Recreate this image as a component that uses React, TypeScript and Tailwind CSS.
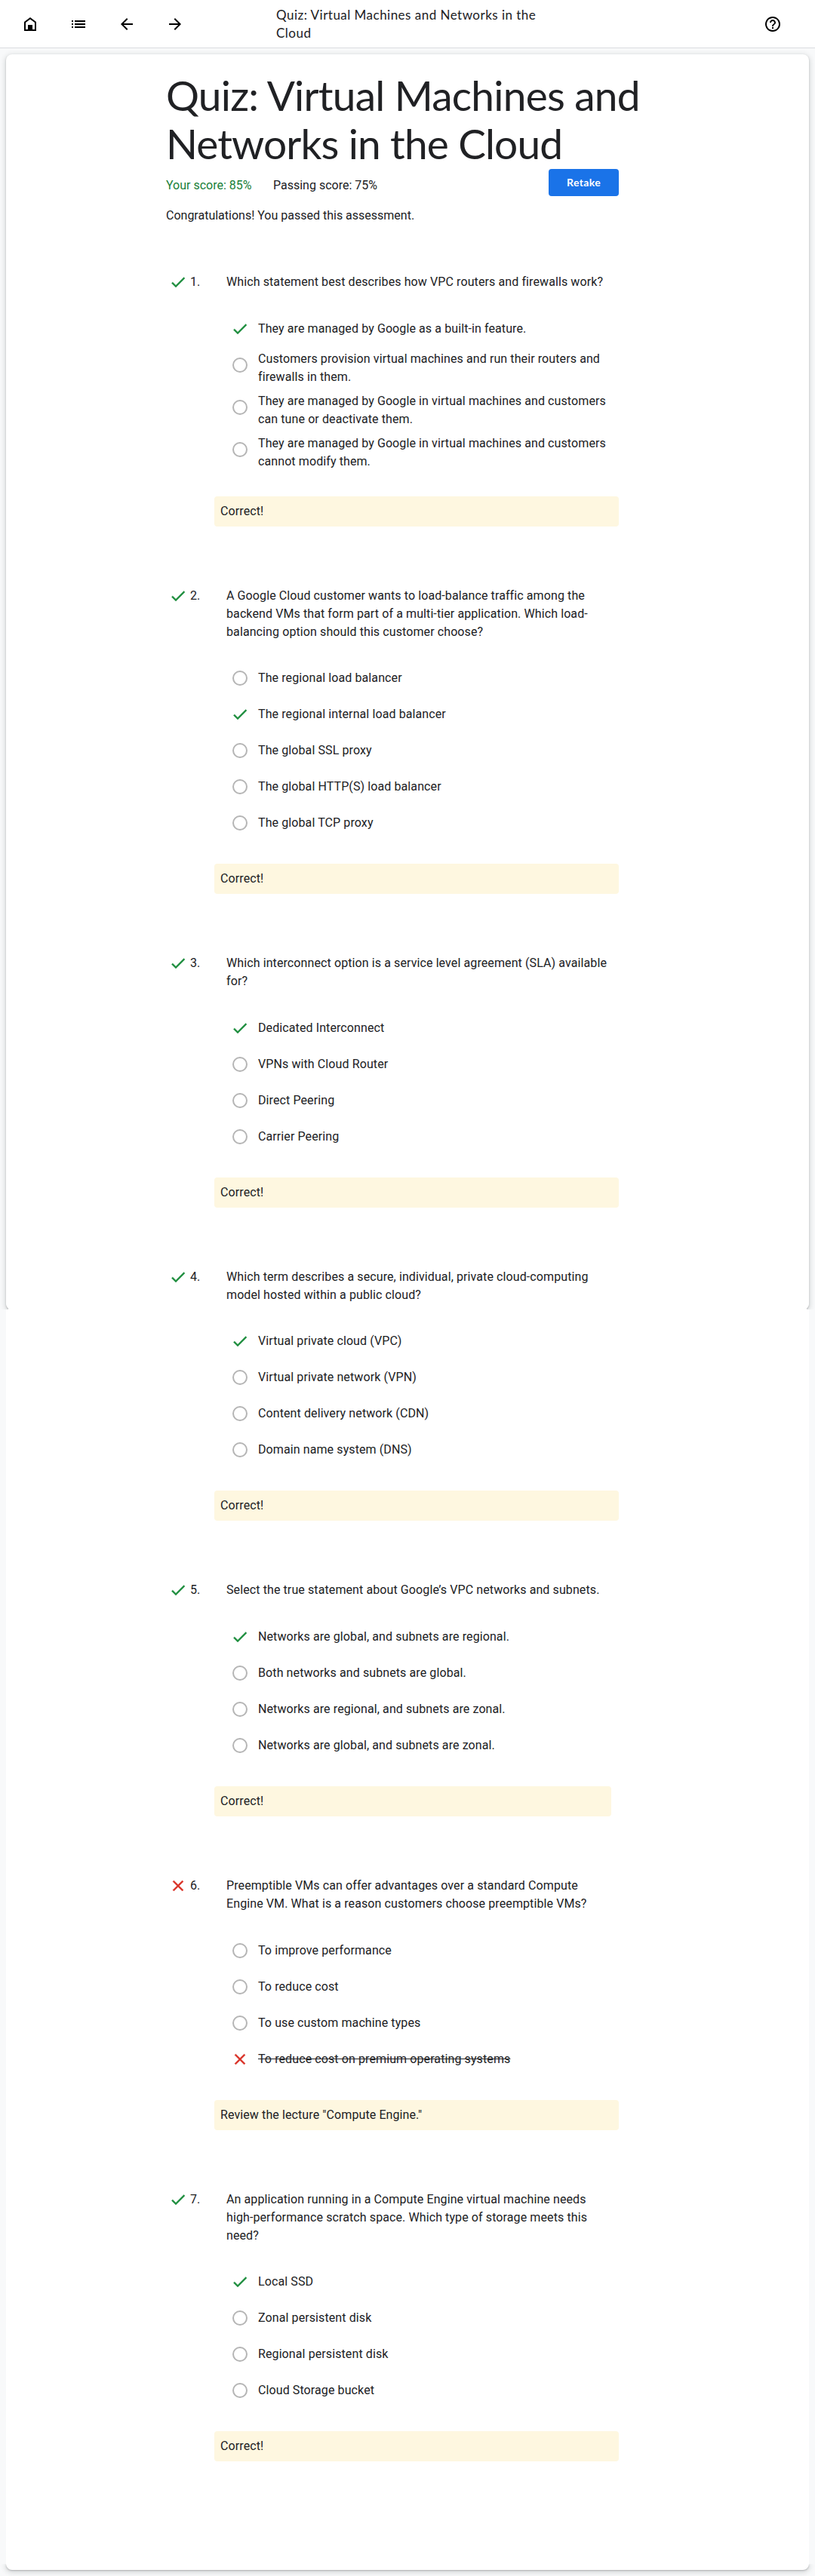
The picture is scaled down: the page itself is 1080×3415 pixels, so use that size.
type Mark = "right" | "wrong" | "none";

type Question = {
  prompt: string[];
  result: Mark;
  options: { lines: string[]; mark?: Mark }[];
  feedback: string;
  narrow?: boolean;
};

const questions: Question[] = [
  {
    prompt: ["Which statement best describes how VPC routers and firewalls work?"],
    result: "right",
    options: [
      { lines: ["They are managed by Google as a built-in feature."], mark: "right" },
      { lines: ["Customers provision virtual machines and run their routers and", "firewalls in them."] },
      { lines: ["They are managed by Google in virtual machines and customers", "can tune or deactivate them."] },
      { lines: ["They are managed by Google in virtual machines and customers", "cannot modify them."] },
    ],
    feedback: "Correct!",
  },
  {
    prompt: [
      "A Google Cloud customer wants to load-balance traffic among the",
      "backend VMs that form part of a multi-tier application. Which load-",
      "balancing option should this customer choose?",
    ],
    result: "right",
    options: [
      { lines: ["The regional load balancer"] },
      { lines: ["The regional internal load balancer"], mark: "right" },
      { lines: ["The global SSL proxy"] },
      { lines: ["The global HTTP(S) load balancer"] },
      { lines: ["The global TCP proxy"] },
    ],
    feedback: "Correct!",
  },
  {
    prompt: ["Which interconnect option is a service level agreement (SLA) available", "for?"],
    result: "right",
    options: [
      { lines: ["Dedicated Interconnect"], mark: "right" },
      { lines: ["VPNs with Cloud Router"] },
      { lines: ["Direct Peering"] },
      { lines: ["Carrier Peering"] },
    ],
    feedback: "Correct!",
  },
  {
    prompt: ["Which term describes a secure, individual, private cloud-computing", "model hosted within a public cloud?"],
    result: "right",
    options: [
      { lines: ["Virtual private cloud (VPC)"], mark: "right" },
      { lines: ["Virtual private network (VPN)"] },
      { lines: ["Content delivery network (CDN)"] },
      { lines: ["Domain name system (DNS)"] },
    ],
    feedback: "Correct!",
  },
  {
    prompt: ["Select the true statement about Google’s VPC networks and subnets."],
    result: "right",
    options: [
      { lines: ["Networks are global, and subnets are regional."], mark: "right" },
      { lines: ["Both networks and subnets are global."] },
      { lines: ["Networks are regional, and subnets are zonal."] },
      { lines: ["Networks are global, and subnets are zonal."] },
    ],
    feedback: "Correct!",
    narrow: true,
  },
  {
    prompt: ["Preemptible VMs can offer advantages over a standard Compute", "Engine VM. What is a reason customers choose preemptible VMs?"],
    result: "wrong",
    options: [
      { lines: ["To improve performance"] },
      { lines: ["To reduce cost"] },
      { lines: ["To use custom machine types"] },
      { lines: ["To reduce cost on premium operating systems"], mark: "wrong" },
    ],
    feedback: 'Review the lecture "Compute Engine."',
  },
  {
    prompt: [
      "An application running in a Compute Engine virtual machine needs",
      "high-performance scratch space. Which type of storage meets this",
      "need?",
    ],
    result: "right",
    options: [
      { lines: ["Local SSD"], mark: "right" },
      { lines: ["Zonal persistent disk"] },
      { lines: ["Regional persistent disk"] },
      { lines: ["Cloud Storage bucket"] },
    ],
    feedback: "Correct!",
  },
];

function Icon({ d, className = "" }: { d: string; className?: string }) {
  return (
    <svg viewBox="0 0 24 24" className={"size-6 shrink-0 " + className} fill="currentColor" fillRule="evenodd">
      <path d={d} />
    </svg>
  );
}

const HOME = "M4 21V9l8-6 8 6v12H4zM6 19V10l6-4.5 6 4.500v9h-3v-6H9v6H6z";
const LIST =
  "M3 13h2v-2H3v2zm0 4h2v-2H3v2zm0-8h2V7H3v2zm4 4h14v-2H7v2zm0 4h14v-2H7v2zM7 7v2h14V7H7z";
const BACK = "M20 11H7.830l5.590-5.590L12 4l-8 8 8 8 1.410-1.410L7.830 13H20v-2z";
const FORWARD = "M12 4l-1.410 1.410L16.170 11H4v2h12.170l-5.580 5.590L12 20l8-8z";
const HELP =
  "M11 18h2v-2h-2v2zm1-16C6.480 2 2 6.480 2 12s4.480 10 10 10 10-4.480 10-10S17.520 2 12 2zm0 18c-4.410 0-8-3.590-8-8s3.590-8 8-8 8 3.590 8 8-3.590 8-8 8zm0-14c-2.210 0-4 1.790-4 4h2c0-1.100.9-2 2-2s2 .9 2 2c0 2-3 1.750-3 5h2c0-2.250 3-2.500 3-5 0-2.210-1.790-4-4-4z";
const CHECK = "M9 16.170L4.830 12l-1.420 1.410L9 19 21 7l-1.410-1.410L9 16.170z";
const CROSS =
  "M19 6.410L17.590 5 12 10.590 6.410 5 5 6.410 10.590 12 5 17.590 6.410 19 12 13.410 17.590 19 19 17.590 13.410 12z";

function NavButton({ label, d }: { label: string; d: string }) {
  return (
    <button aria-label={label} className="flex h-16 w-16 items-center justify-center text-black">
      <Icon d={d} />
    </button>
  );
}

function MarkIcon({ mark }: { mark: Mark }) {
  if (mark === "right") return <Icon d={CHECK} className="stroke-[#1e8e3e] stroke-[0.4] text-[#1e8e3e]" />;
  if (mark === "wrong") return <Icon d={CROSS} className="stroke-[#d93025] stroke-[0.4] text-[#d93025]" />;
  return <span className="m-0.5 size-5 rounded-full border-2 border-[#b5b5b5]" />;
}

function Lines({ lines }: { lines: string[] }) {
  return (
    <>
      {lines.map((line) => (
        <span key={line} className="block whitespace-nowrap">
          {line}
        </span>
      ))}
    </>
  );
}

function QuestionBlock({ q, index }: { q: Question; index: number }) {
  return (
    <li className="mb-20 tracking-[0.1px]">
      <div className="mb-[25.6px] flex pl-1">
        <MarkIcon mark={q.result} />
        <span className="ml-1 w-12">{index}.</span>
        <p>
          <Lines lines={q.prompt} />
        </p>
      </div>
      <ul className="pl-[86px]">
        {q.options.map((o) => (
          <li key={o.lines.join()} className="flex items-start">
            <span className="flex h-12 items-center">
              <MarkIcon mark={o.mark ?? "none"} />
            </span>
            <div className="ml-3 flex min-h-12 flex-col justify-center py-1">
              <div className={o.mark === "wrong" ? "line-through" : ""}>
                <Lines lines={o.lines} />
              </div>
            </div>
          </li>
        ))}
      </ul>
      <p className={"mt-[30px] ml-16 rounded bg-[#fef7e0] p-2 " + (q.narrow ? "mr-2.5" : "")}>{q.feedback}</p>
    </li>
  );
}

/** The card surface behind the quiz, with its shadowed upper part and bottom edge. */
function Surface() {
  return (
    <div className="col-start-1 row-start-1 flex flex-col">
      <div className="h-[1672px] overflow-hidden px-2 pt-2">
        <div className="h-[1663px] rounded-t-lg rounded-b-[6px] bg-white shadow-[0_1px_2px_rgba(60,64,67,0.3),0_2px_6px_2px_rgba(60,64,67,0.15)]" />
      </div>
      <div className="relative mx-[11px] -mt-1 h-1 bg-white" />
      <div className="mx-2 flex-1 bg-white" />
      <div className="flex h-4 flex-col overflow-hidden px-2">
        <div className="h-2 rounded-b-lg bg-white shadow-[0_1px_2px_rgba(60,64,67,0.3),0_2px_6px_2px_rgba(60,64,67,0.15)]" />
      </div>
    </div>
  );
}

export default function App() {
  return (
    <div className="flex h-[3415px] w-[1080px] flex-col overflow-hidden bg-[#f8f9fa] font-['Roboto',sans-serif] text-base leading-6 text-[#202124]">
      <header className="flex h-16 shrink-0 border-b border-[#dadce0] bg-white pr-6 pl-2">
        <NavButton label="Home" d={HOME} />
        <NavButton label="Contents" d={LIST} />
        <NavButton label="Previous" d={BACK} />
        <NavButton label="Next" d={FORWARD} />
        <div className="ml-[102px] flex w-[348px] items-center font-['Lato',sans-serif] text-[17px] leading-6 tracking-[0.48px] whitespace-nowrap">
          <div>
            Quiz: Virtual Machines and Networks in the
            <br />
            Cloud
          </div>
        </div>
        <div className="ml-auto">
          <NavButton label="Help" d={HELP} />
        </div>
      </header>
      <main className="grid flex-1">
        <Surface />
        <div className="col-start-1 row-start-1 mx-auto w-[640px] pt-[30px]">
          <div className="w-[600px]">
            <div className="h-[130px]">
              <h1 className="font-['Lato',sans-serif] text-[55px] leading-[64px] whitespace-nowrap">
                <span className="tracking-[-0.76px]">Quiz: Virtual Machines and</span>
                <br />
                <span className="tracking-[-0.87px]">Networks in the Cloud</span>
              </h1>
            </div>
            <div className="flex h-9 items-end">
              <span className="mb-0.5 w-[142px] text-[#188038]">Your score: 85%</span>
              <span className="mb-0.5">Passing score: 75%</span>
              <button className="ml-auto h-9 w-[93px] rounded bg-[#1a73e8] font-['Lato',sans-serif] text-sm font-bold tracking-[0.35px] text-white">
                Retake
              </button>
            </div>
            <p className="mt-3.5">Congratulations! You passed this assessment.</p>
            <ol className="mt-16">
              {questions.map((q, i) => (
                <QuestionBlock key={i} q={q} index={i + 1} />
              ))}
            </ol>
          </div>
        </div>
      </main>
    </div>
  );
}
